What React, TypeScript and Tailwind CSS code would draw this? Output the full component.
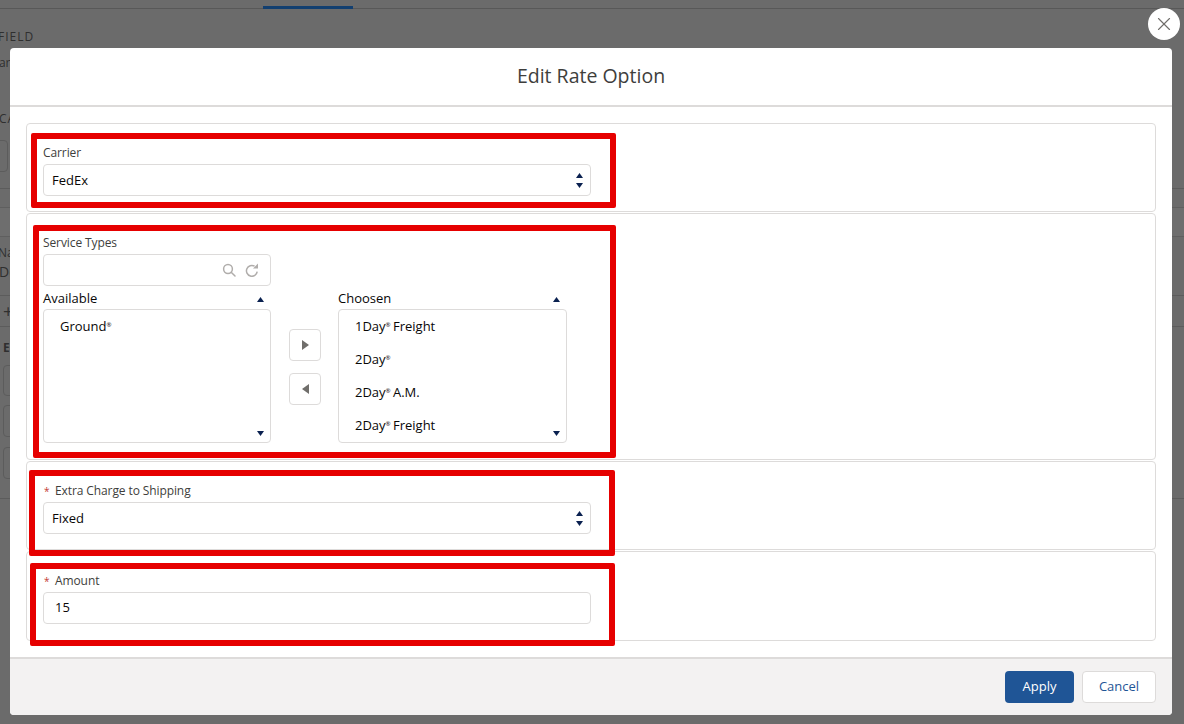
import { X } from "lucide-react";
import type { ReactNode } from "react";

const FONT = "font-['Open_Sans','Liberation_Sans',sans-serif]";

function Tri({ dir, className }: { dir: "up" | "down" | "left" | "right"; className: string }) {
  const points = {
    up: "4,0 8,6 0,6",
    down: "0,0 8,0 4,6",
    left: "8,0 8,12 0,6",
    right: "0,0 8,6 0,12",
  }[dir];
  const box = dir === "left" || dir === "right" ? "0 0 8 12" : "0 0 8 6";
  return (
    <svg viewBox={box} preserveAspectRatio="none" className={className}>
      <polygon points={points} fill="currentColor" />
    </svg>
  );
}

function SearchGlyph() {
  return (
    <svg viewBox="0 0 14 14" className="h-[14px] w-[14px]" fill="none" stroke="currentColor" strokeWidth="1.5">
      <circle cx="6" cy="6" r="4.4" />
      <path d="M9.2 9.2 13 13" strokeLinecap="round" />
    </svg>
  );
}

function RefreshGlyph() {
  return (
    <svg viewBox="0 0 14 14" className="h-[14px] w-[14px]" fill="none" stroke="currentColor" strokeWidth="1.5">
      <path d="M12.2 8.6A5.4 5.4 0 1 1 9.6 3.2" />
      <polygon points="8,5.6 13,5.6 13,0.6" fill="currentColor" stroke="none" />
    </svg>
  );
}

function Annotation({ className }: { className: string }) {
  return <div className={`pointer-events-none absolute z-10 rounded-[2px] border-[6px] border-[#e60000] ${className}`} />;
}

function FieldLabel({ children, required }: { children: ReactNode; required?: boolean }) {
  return (
    <div className="flex h-[18px] items-center text-[12px] leading-[18px] tracking-[-0.1px] text-[#3e3e3c]">
      {required && <span className="ml-[1px] mr-[6px] w-[5px] text-[10px] text-[#c23934]">*</span>}
      {children}
    </div>
  );
}

function SelectBox({ value }: { value: string }) {
  return (
    <div className="mt-[2px] flex h-[32px] w-[548px] items-center justify-between rounded-[4px] border border-[#dddbda] bg-white pl-[8px] pr-[7px] text-[13px] text-[#080707]">
      <span className="pt-[2px]">{value}</span>
      <div className="flex flex-col gap-[5px] text-[#0a2150]">
        <Tri dir="up" className="h-[5px] w-[7px]" />
        <Tri dir="down" className="h-[5px] w-[7px]" />
      </div>
    </div>
  );
}

function Reg() {
  return <span className="relative top-[-4px] mr-[-1px] text-[6px] leading-none">®</span>;
}

function DualList({ title, items, width }: { title: string; items: ReactNode[]; width: string }) {
  return (
    <div className={width}>
      <div className="flex h-[23px] items-center justify-between pr-[7px] pt-[3px] text-[13px] text-[#080707]">
        <span>{title}</span>
        <Tri dir="up" className="h-[5px] w-[7px] text-[#0a2150]" />
      </div>
      <div className="relative h-[134px] overflow-hidden rounded-[4px] border border-[#dddbda] pl-[16px] text-[13px] text-[#080707]">
        {items.map((item, i) => (
          <div key={i} className="flex h-[33px] items-center">
            <span>{item}</span>
          </div>
        ))}
        <Tri dir="down" className="absolute bottom-[6px] right-[6px] h-[5px] w-[7px] text-[#0a2150]" />
      </div>
    </div>
  );
}

function MoveButton({ dir }: { dir: "left" | "right" }) {
  return (
    <div className="flex h-[32px] w-[32px] items-center justify-center rounded-[4px] border border-[#dddbda] bg-white text-[#706e6b]">
      <Tri dir={dir} className="h-[10px] w-[7px]" />
    </div>
  );
}

function Backdrop() {
  return (
    <div className="flex h-[724px] flex-col overflow-hidden bg-[#6b6b6b] text-[#2f2f2f]">
      <div className="h-[9px] border-b border-[#585858] pl-[263px]">
        <div className="mt-[6px] h-[3px] w-[90px] bg-[#123f70]" />
      </div>
      <div className="ml-[-2px] mt-[21px] h-[14px] text-[12px] leading-[14px] tracking-[1px]">FIELD</div>
      <div className="ml-[-16px] mt-[11px] h-[16px] text-[12px] leading-[16px]">Chart</div>
      <div className="ml-[-1px] mt-[40px] h-[16px] text-[12px] leading-[16px] tracking-[1px]">CA</div>
      <div className="ml-[-10px] mt-[13px] h-[32px] w-[18px] rounded-[4px] border border-[#5c5c5c]" />
      <div className="mt-[16px] h-[1px] bg-[#5c5c5c]" />
      <div className="h-[18px]" />
      <div className="h-[30px] border-y border-[#5f5f5f] bg-[#6e6e6e]" />
      <div className="ml-[-2px] mt-[9px] h-[14px] text-[12px] leading-[14px]">Na</div>
      <div className="ml-[-1px] mt-[3px] h-[18px] text-[14px] leading-[18px]">De</div>
      <div className="mt-[14px] flex h-[32px] items-center border-y border-[#5c5c5c] pl-[3px] text-[18px]">+</div>
      <div className="ml-[3px] mt-[14px] h-[14px] text-[12px] font-bold leading-[14px]">E</div>
      <div className="ml-[3px] mt-[10px] h-[31px] w-[12px] rounded-[4px] border border-[#5c5c5c]" />
      <div className="ml-[3px] mt-[9px] h-[32px] w-[12px] rounded-[4px] border border-[#5c5c5c]" />
      <div className="ml-[3px] mt-[10px] h-[32px] w-[12px] rounded-[4px] border border-[#5c5c5c]" />
      <div className="mt-[4px] h-[16px] border-b border-[#5c5c5c]" />
    </div>
  );
}

export default function App() {
  return (
    <div className={`relative h-[724px] w-[1184px] overflow-hidden ${FONT}`}>
      <Backdrop />

      <button className="absolute left-[1148px] top-[8px] flex h-[32px] w-[32px] items-center justify-center rounded-full bg-white text-[#706e6b]">
        <X size={22} strokeWidth={1.25} />
      </button>

      <div className="absolute left-[10px] top-[48px] flex h-[667px] w-[1162px] flex-col overflow-hidden rounded-[4px] bg-white">
        <div className="flex h-[59px] items-center justify-center border-b-2 border-[#dddbda] pb-[2px] text-[19.5px] text-[#3e3e3c]">
          Edit Rate Option
        </div>

        <div className="flex flex-1 flex-col gap-px px-[16px] pt-[16px]">
          <div className="relative h-[89px] rounded-[4px] border border-[#dddbda] pl-[16px] pt-[20px]">
            <FieldLabel>Carrier</FieldLabel>
            <SelectBox value="FedEx" />
            <Annotation className="left-[4px] top-[9px] h-[75px] w-[585px]" />
          </div>

          <div className="relative h-[247px] rounded-[4px] border border-[#dddbda] pl-[16px] pt-[20px]">
            <FieldLabel>Service Types</FieldLabel>
            <div className="mt-[2px] flex h-[32px] w-[228px] items-center justify-end gap-[9px] rounded-[4px] border border-[#dddbda] pr-[11px] text-[#b0adab]">
              <SearchGlyph />
              <RefreshGlyph />
            </div>
            <div className="flex items-start">
              <DualList width="w-[228px]" title="Available" items={[<>Ground<Reg /></>]} />
              <div className="ml-[18px] mr-[17px] mt-[43px] flex flex-col gap-[12px]">
                <MoveButton dir="right" />
                <MoveButton dir="left" />
              </div>
              <DualList
                width="w-[229px]"
                title="Choosen"
                items={[
                  <>1Day<Reg /> Freight</>,
                  <>2Day<Reg /></>,
                  <>2Day<Reg /> A.M.</>,
                  <>2Day<Reg /> Freight</>,
                ]}
              />
            </div>
            <Annotation className="left-[6px] top-[11px] h-[233px] w-[583px]" />
          </div>

          <div className="relative h-[89px] rounded-[4px] border border-[#dddbda] pl-[16px] pt-[20px]">
            <FieldLabel required>Extra Charge to Shipping</FieldLabel>
            <SelectBox value="Fixed" />
            <Annotation className="left-[2px] top-[8px] h-[86px] w-[586px]" />
          </div>

          <div className="relative h-[90px] rounded-[4px] border border-[#dddbda] pl-[16px] pt-[20px]">
            <FieldLabel required>Amount</FieldLabel>
            <div className="mt-[2px] flex h-[32px] w-[548px] items-center rounded-[4px] border border-[#dddbda] pl-[11px] text-[13px] text-[#080707]">
              15
            </div>
            <Annotation className="left-[3px] top-[11px] h-[83px] w-[585px]" />
          </div>
        </div>

        <div className="flex h-[58px] items-center justify-end gap-[8px] border-t-2 border-[#dddbda] bg-[#f3f2f2] pr-[16px]">
          <button className="h-[32px] w-[69px] rounded-[4px] bg-[#1f5596] text-[13px] text-white">Apply</button>
          <button className="h-[32px] w-[74px] rounded-[4px] border border-[#dddbda] bg-white text-[13px] text-[#1f5596]">
            Cancel
          </button>
        </div>
      </div>
    </div>
  );
}
